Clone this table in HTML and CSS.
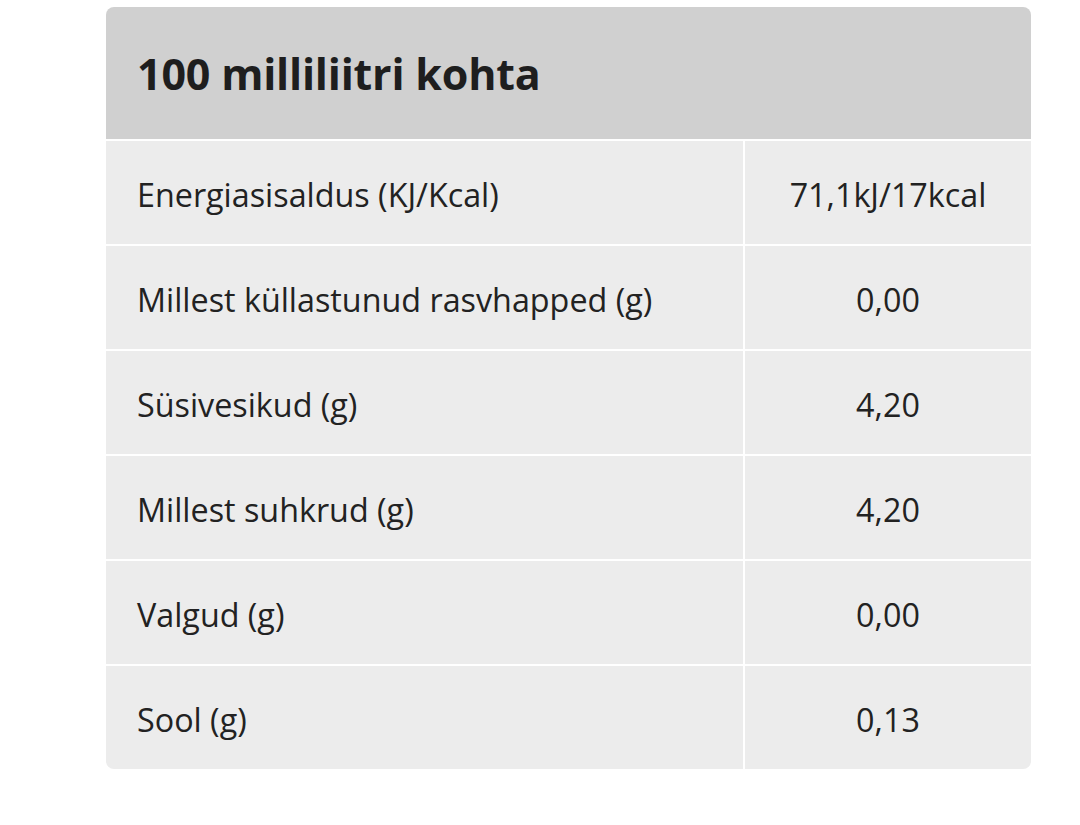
FILE: index.html
```html
<!DOCTYPE html>
<html>
<head>
<meta charset="utf-8">
<link rel="stylesheet" href="styles.css">
</head>
<body>
<div class="card">
  <div class="head">100 milliliitri kohta</div>
  <div class="grid">
    <div class="label">Energiasisaldus (KJ/Kcal)</div><div class="val">71,1kJ/17kcal</div>
    <div class="label">Millest küllastunud rasvhapped (g)</div><div class="val">0,00</div>
    <div class="label">Süsivesikud (g)</div><div class="val">4,20</div>
    <div class="label">Millest suhkrud (g)</div><div class="val">4,20</div>
    <div class="label">Valgud (g)</div><div class="val">0,00</div>
    <div class="label">Sool (g)</div><div class="val">0,13</div>
  </div>
</div>
</body>
</html>
```
FILE: styles.css
```css
html, body { margin: 0; padding: 0; background: #fff; }
body { padding: 7px 0 0 106px; font-family: "Open Sans", "Noto Sans", sans-serif; color: #222; }
.card {
  width: 925px;
  border-radius: 8px;
  overflow: hidden;
  display: flex;
  flex-direction: column;
  gap: 2px;
}
.head {
  background: #d0d0d0;
  height: 132px;
  display: flex;
  align-items: center;
  padding-left: 31px;
  font-weight: 700;
  font-size: 43px;
  color: #1e1e1e;
  letter-spacing: -0.2px;
}
.grid {
  display: grid;
  grid-template-columns: 637px 286px;
  grid-auto-rows: 103px;
  gap: 2px;
}
.label, .val {
  background: #ececec;
  display: flex;
  align-items: center;
  font-size: 32.3px;
}
.label { padding-left: 31px; padding-top: 2px; }
.val { justify-content: center; padding-top: 2px; }
```
